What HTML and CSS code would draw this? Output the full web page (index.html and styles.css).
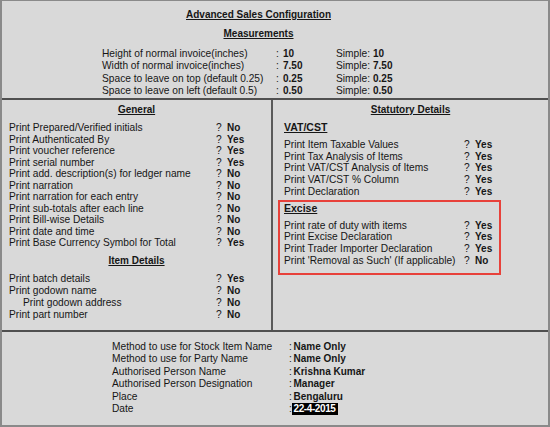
FILE: index.html
```html
<!DOCTYPE html>
<html>
  <head>
    <title>Advanced Sales Configuration</title>
    <link rel="stylesheet" href="styles.css">
  </head>
  <body>
    <div class="window">
      <div class="top">
        <p class="title">Advanced Sales Configuration</p>
        <p class="heading">Measurements</p>
        <div class="measure">
          <div class="mrow"><span class="mlabel">Height of normal invoice(inches)</span><span class="colon">:</span><b class="mval">10</b><span class="simple">Simple:</span><b>10</b></div>
          <div class="mrow"><span class="mlabel">Width of normal invoice(inches)</span><span class="colon">:</span><b class="mval">7.50</b><span class="simple">Simple:</span><b>7.50</b></div>
          <div class="mrow"><span class="mlabel">Space to leave on top (default 0.25)</span><span class="colon">:</span><b class="mval">0.25</b><span class="simple">Simple:</span><b>0.25</b></div>
          <div class="mrow"><span class="mlabel">Space to leave on left (default 0.5)</span><span class="colon">:</span><b class="mval">0.50</b><span class="simple">Simple:</span><b>0.50</b></div>
        </div>
      </div>

      <div class="middle">
        <div class="col left">
          <p class="heading">General</p>
          <div class="list general">
            <div class="row"><span class="label">Print Prepared/Verified initials</span><span class="q">?</span><b>No</b></div>
            <div class="row"><span class="label">Print Authenticated By</span><span class="q">?</span><b>Yes</b></div>
            <div class="row"><span class="label">Print voucher reference</span><span class="q">?</span><b>Yes</b></div>
            <div class="row"><span class="label">Print serial number</span><span class="q">?</span><b>Yes</b></div>
            <div class="row"><span class="label">Print add. description(s) for ledger name</span><span class="q">?</span><b>No</b></div>
            <div class="row"><span class="label">Print narration</span><span class="q">?</span><b>No</b></div>
            <div class="row"><span class="label">Print narration for each entry</span><span class="q">?</span><b>No</b></div>
            <div class="row"><span class="label">Print sub-totals after each line</span><span class="q">?</span><b>No</b></div>
            <div class="row"><span class="label">Print Bill-wise Details</span><span class="q">?</span><b>No</b></div>
            <div class="row"><span class="label">Print date and time</span><span class="q">?</span><b>No</b></div>
            <div class="row"><span class="label">Print Base Currency Symbol for Total</span><span class="q">?</span><b>Yes</b></div>
          </div>
          <p class="heading item-head">Item Details</p>
          <div class="list items">
            <div class="row"><span class="label">Print batch details</span><span class="q">?</span><b>Yes</b></div>
            <div class="row"><span class="label">Print godown name</span><span class="q">?</span><b>No</b></div>
            <div class="row"><span class="label sub">Print godown address</span><span class="q">?</span><b>No</b></div>
            <div class="row"><span class="label">Print part number</span><span class="q">?</span><b>No</b></div>
          </div>
        </div>

        <div class="col right">
          <p class="heading">Statutory Details</p>
          <p class="group">VAT/CST</p>
          <div class="list vat">
            <div class="row"><span class="label">Print Item Taxable Values</span><span class="q">?</span><b>Yes</b></div>
            <div class="row"><span class="label">Print Tax Analysis of Items</span><span class="q">?</span><b>Yes</b></div>
            <div class="row"><span class="label">Print VAT/CST Analysis of Items</span><span class="q">?</span><b>Yes</b></div>
            <div class="row"><span class="label">Print VAT/CST % Column</span><span class="q">?</span><b>Yes</b></div>
            <div class="row"><span class="label">Print Declaration</span><span class="q">?</span><b>Yes</b></div>
          </div>
          <div class="excise">
            <p class="group">Excise</p>
            <div class="list">
              <div class="row"><span class="label">Print rate of duty with items</span><span class="q">?</span><b>Yes</b></div>
              <div class="row"><span class="label">Print Excise Declaration</span><span class="q">?</span><b>Yes</b></div>
              <div class="row"><span class="label">Print Trader Importer Declaration</span><span class="q">?</span><b>Yes</b></div>
              <div class="row"><span class="label">Print 'Removal as Such' (If applicable)</span><span class="q">?</span><b>No</b></div>
            </div>
          </div>
        </div>
      </div>

      <div class="bottom">
        <div class="brow"><span class="blabel">Method to use for Stock Item Name</span><span class="colon">:</span><b>Name Only</b></div>
        <div class="brow"><span class="blabel">Method to use for Party Name</span><span class="colon">:</span><b>Name Only</b></div>
        <div class="brow"><span class="blabel">Authorised Person Name</span><span class="colon">:</span><b>Krishna Kumar</b></div>
        <div class="brow"><span class="blabel">Authorised Person Designation</span><span class="colon">:</span><b>Manager</b></div>
        <div class="brow"><span class="blabel">Place</span><span class="colon">:</span><b>Bengaluru</b></div>
        <div class="brow"><span class="blabel">Date</span><span class="colon">:</span><b class="date">22-4-2015</b></div>
      </div>
    </div>
  </body>
</html>
```
FILE: styles.css
```css
body {
  margin: 0;
  font-family: "Liberation Sans", Arial, sans-serif;
  font-size: 10.2px;
  color: #161616;
}

p {
  margin: 0;
}

b {
  font-size: 10px;
}

.window {
  width: 550px;
  height: 427px;
  box-sizing: border-box;
  border: 2px solid #8a8a8a;
  border-top-width: 1px;
  background-color: #d9d9d9;
  display: flex;
  flex-direction: column;
}

/* headings */
.title,
.heading {
  font-weight: bold;
  text-decoration: underline;
  text-align: center;
  font-size: 10px;
  line-height: 14px;
}

.group {
  font-weight: bold;
  text-decoration: underline;
  font-size: 10.5px;
  line-height: 14px;
}

/* measurements */
.top {
  height: 99px;
  flex-shrink: 0;
  box-sizing: border-box;
  padding-top: 7px;
  border-bottom: 2px solid #505050;
}

.top .title,
.top .heading {
  margin-right: 33px;
}

.top .heading {
  margin-top: 5px;
}

.measure {
  margin-top: 7px;
  padding-left: 100px;
}

.mrow,
.row,
.brow {
  display: flex;
  white-space: nowrap;
}

.mrow > *,
.row > *,
.brow > * {
  flex-shrink: 0;
}

.mrow {
  line-height: 12.3px;
}

.mlabel {
  width: 174px;
}

.colon {
  width: 7px;
}

.mval {
  width: 53px;
}

.simple {
  width: 37px;
}

/* two columns */
.middle {
  height: 230px;
  flex-shrink: 0;
  display: grid;
  grid-template-columns: 271px 1fr;
  border-bottom: 2px solid #505050;
}

.left {
  border-right: 2px solid #5a5a5a;
  padding-left: 7px;
}

.right {
  padding-left: 11px;
}

.left .heading {
  margin: 3px 0 0 -7px;
}

.right .heading {
  margin: 3px 0 0 -11px;
}

.label {
  width: 207px;
}

.sub {
  padding-left: 14px;
  width: 193px;
}

.q {
  width: 11px;
}

.general {
  margin-top: 5px;
  line-height: 11.5px;
}

.left .item-head {
  margin-top: 5px;
}

.items {
  margin-top: 5px;
  line-height: 12px;
}

.right .group {
  margin-top: 3px;
}

.right .label {
  width: 180px;
}

.vat {
  margin-top: 5px;
  line-height: 11.7px;
}

.excise {
  width: 223px;
  box-sizing: border-box;
  margin: 2px 0 0 -6px;
  padding: 0 0 7px 4px;
  border: 2px solid #e8413a;
}

.right .excise .group {
  margin-top: 0;
  line-height: 12px;
}

.excise .list {
  margin-top: 6px;
  line-height: 11.7px;
}

/* footer settings */
.bottom {
  padding: 9px 0 0 110px;
}

.brow {
  line-height: 12.4px;
}

.blabel {
  width: 177px;
}

.bottom .colon {
  width: 4.5px;
}

.date {
  background-color: #000;
  color: #fff;
  margin-left: -2px;
  padding: 0 2px;
  letter-spacing: -0.4px;
}
```
